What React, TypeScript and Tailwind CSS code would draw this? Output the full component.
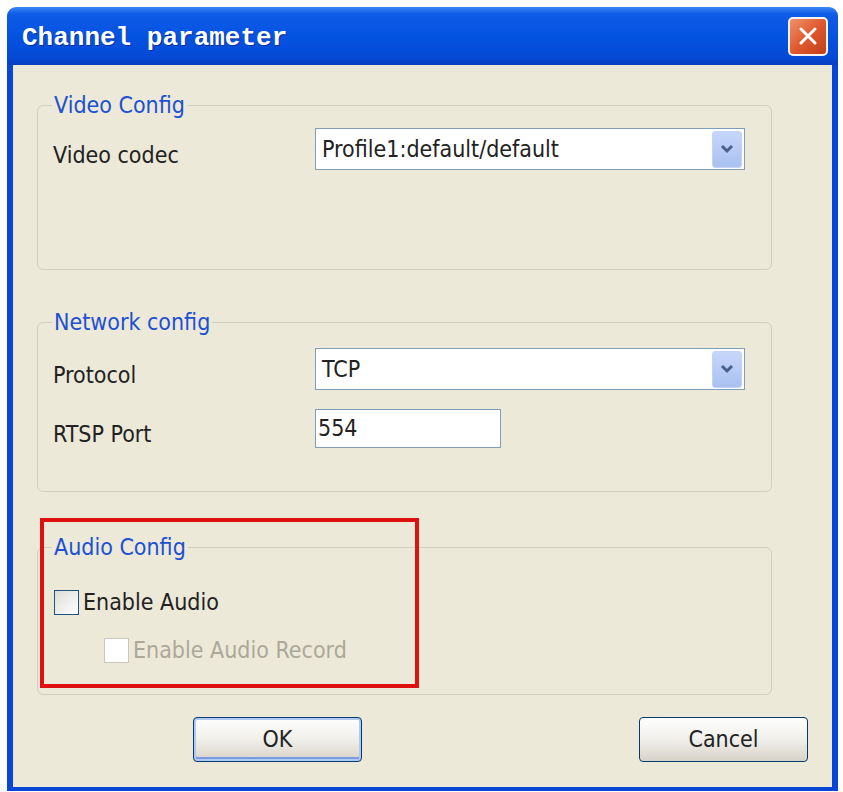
import type { ReactNode } from "react";

const uiFont = "font-['DejaVu_Sans_Condensed','Liberation_Sans',sans-serif]";

function GroupBox({
  title,
  className,
  children,
}: {
  title: string;
  className: string;
  children?: ReactNode;
}) {
  return (
    <div className={`mr-[60px] ml-[24px] rounded-[6px] border border-[#D0D0BF] ${className}`}>
      <span className="-mt-[15px] ml-[14px] block w-fit bg-[#ECE9D8] px-[2px] text-[23px] leading-[28px] text-[#2050D2]">
        {title}
      </span>
      {children}
    </div>
  );
}

function Chevron() {
  return (
    <svg width="16" height="12" viewBox="0 0 16 12">
      <path d="M3 3 L8 8 L13 3" fill="none" stroke="#4A5F8C" strokeWidth="3" />
    </svg>
  );
}

function ComboBox({ value }: { value: string }) {
  return (
    <div className="flex h-[42px] w-[430px] items-center border border-[#7F9DB9] bg-white pr-[2px]">
      <span className="flex-1 pl-[6px] text-[23px] text-[#222]">{value}</span>
      <div className="flex h-[37px] w-[30px] items-center justify-center rounded-[3px] border border-[#C3D3F8] bg-gradient-to-b from-[#C6D6FA] via-[#B8CCF6] to-[#A9C0F0]">
        <Chevron />
      </div>
    </div>
  );
}

function FieldRow({ label, children, className = "" }: { label: string; children: ReactNode; className?: string }) {
  return (
    <div className={`flex items-center pl-[15px] ${className}`}>
      {/* labels sit a little below the control's centre line */}
      <span className="w-[262px] translate-y-[6px] text-[23px] text-[#222]">{label}</span>
      {children}
    </div>
  );
}

function CheckBox({ label, disabled = false, className = "" }: { label: string; disabled?: boolean; className?: string }) {
  return (
    <label className={`flex h-[26px] items-center gap-[4px] ${className}`}>
      <span
        className={
          disabled
            ? "h-[25px] w-[25px] border border-[#CAC8BB] bg-white"
            : "h-[25px] w-[25px] border border-[#1C5180] bg-gradient-to-br from-[#DCDCD7] to-white"
        }
      />
      <span className={`text-[23px] leading-[26px] ${disabled ? "text-[#ACA899]" : "text-[#222]"}`}>{label}</span>
    </label>
  );
}

function XpButton({ label, isDefault = false }: { label: string; isDefault?: boolean }) {
  return (
    <button
      className={`h-[45px] w-[169px] rounded-[4px] border border-[#003C74] bg-gradient-to-b from-white via-[#F0EFEA] to-[#D8D3C8] text-[23px] text-[#222] ${
        isDefault ? "shadow-[inset_0_0_0_2px_#B0C8F4,inset_0_-2px_0_2px_#7A9BE0]" : ""
      }`}
    >
      {label}
    </button>
  );
}

export default function App() {
  return (
    <div className={`h-[792px] w-[843px] bg-white pt-[7px] pl-[7px] ${uiFont}`}>
      <div className="w-[831px]">
        <div className="flex h-[58px] items-center justify-between rounded-t-[9px] bg-[linear-gradient(to_bottom,#3C86F4_0%,#0E5BE7_12%,#0553E1_50%,#0449D6_88%,#0A3FBF_100%)] pr-[10px] pl-[15px]">
          <span className="pt-[5px] font-['Liberation_Mono',monospace] text-[26px] font-bold text-white [text-shadow:1px_1px_0_#0A2E9A]">
            Channel parameter
          </span>
          <div className="flex h-[39px] w-[40px] items-center justify-center rounded-[5px] border-2 border-[#F4F4F4] bg-gradient-to-br from-[#F0906A] via-[#E0582E] to-[#C0401C]">
            <svg width="22" height="22" viewBox="0 0 22 22">
              <path d="M4 4 L18 18 M18 4 L4 18" stroke="white" strokeWidth="3" strokeLinecap="round" />
            </svg>
          </div>
        </div>

        <div className="relative h-[726px] border-x-[6px] border-b-[4px] border-[#0846D6] bg-[#ECE9D8] pt-px">
          <GroupBox title="Video Config" className="mt-[39px] h-[165px]">
            <FieldRow label="Video codec" className="mt-[9px]">
              <ComboBox value="Profile1:default/default" />
            </FieldRow>
          </GroupBox>

          <GroupBox title="Network config" className="mt-[52px] h-[170px]">
            <FieldRow label="Protocol" className="mt-[12px]">
              <ComboBox value="TCP" />
            </FieldRow>
            <FieldRow label="RTSP Port" className="mt-[19px]">
              <div className="flex h-[39px] w-[186px] items-center border border-[#7F9DB9] bg-white pl-[2px] text-[23px] text-[#222]">
                554
              </div>
            </FieldRow>
          </GroupBox>

          <GroupBox title="Audio Config" className="mt-[55px] h-[148px]">
            <CheckBox label="Enable Audio" className="mt-[28px] ml-[16px]" />
            <CheckBox label="Enable Audio Record" disabled className="mt-[22px] ml-[66px]" />
          </GroupBox>

          <div className="mt-[22px] flex justify-between pr-[24px] pl-[180px]">
            <XpButton label="OK" isDefault />
            <XpButton label="Cancel" />
          </div>

          {/* highlight around the audio section */}
          <div className="absolute top-[453px] left-[27px] h-[170px] w-[379px] border-[4px] border-[#DE1010]" />
        </div>
      </div>
    </div>
  );
}
